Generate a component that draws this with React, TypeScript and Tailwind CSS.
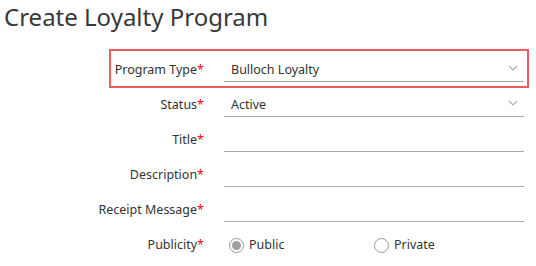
import { ReactNode } from 'react';

function Chevron() {
	return (
		<svg width="10" height="6" viewBox="0 0 10 6" className="shrink-0">
			<path d="M1 1 L5 5 L9 1" fill="none" stroke="#b0b0b0" strokeWidth="1.2" />
		</svg>
	);
}

function Row({ label, children, highlight }: { label: string; children?: ReactNode; highlight?: boolean }) {
	return (
		<div
			className={
				highlight
					? 'ml-[111px] w-[416px] h-[35px] flex outline-2 outline-[#ee5c5f]'
					: 'ml-[111px] w-[416px] h-[35px] flex'
			}
		>
			<div className="w-[93px] shrink-0 flex justify-end pt-[10px]">
				<span className="whitespace-nowrap text-[12.5px] leading-[18px] text-[#333]">
					{label}
					<span className="text-[#ff0000]">*</span>
				</span>
			</div>
			<div className="ml-[20px] w-[300px]">{children}</div>
		</div>
	);
}

function Field({ value, select }: { value?: string; select?: boolean }) {
	return (
		<div className="h-[31px] border-b border-[#aaaaaa] flex items-start pt-[10px] pl-[7px] pr-[6px]">
			<span className="flex-1 text-[12.5px] leading-[18px] text-[#333]">{value}</span>
			{select && (
				<div className="pt-[4px]">
					<Chevron />
				</div>
			)}
		</div>
	);
}

function Radio({ label, checked }: { label: string; checked?: boolean }) {
	return (
		<div className="flex items-center gap-[5px]">
			<div className="w-[15px] h-[15px] rounded-full border border-[#9a9a9a] flex items-center justify-center bg-white">
				{checked && <div className="w-[9px] h-[9px] rounded-full bg-[#a0a0a0]" />}
			</div>
			<span className="text-[12.5px] leading-[18px] text-[#333]">{label}</span>
		</div>
	);
}

export default function App() {
	return (
		<div className="w-[536px] h-[266px] bg-white overflow-hidden" style={{ fontFamily: '"Noto Sans", "Open Sans", sans-serif' }}>
			<h1 className="pl-[4px] pt-[2px] text-[24px] leading-[30px] text-[#383838] font-normal">
				Create Loyalty Program
			</h1>
			<div className="mt-[19px]">
				<Row label="Program Type" highlight>
					<Field value="Bulloch Loyalty" select />
				</Row>
				<Row label="Status">
					<Field value="Active" select />
				</Row>
				<Row label="Title">
					<Field />
				</Row>
				<Row label="Description">
					<Field />
				</Row>
				<Row label="Receipt Message">
					<Field />
				</Row>
				<Row label="Publicity">
					<div className="flex pt-[10px] pl-[5px]">
						<div className="w-[145px]">
							<Radio label="Public" checked />
						</div>
						<Radio label="Private" />
					</div>
				</Row>
			</div>
		</div>
	);
}
